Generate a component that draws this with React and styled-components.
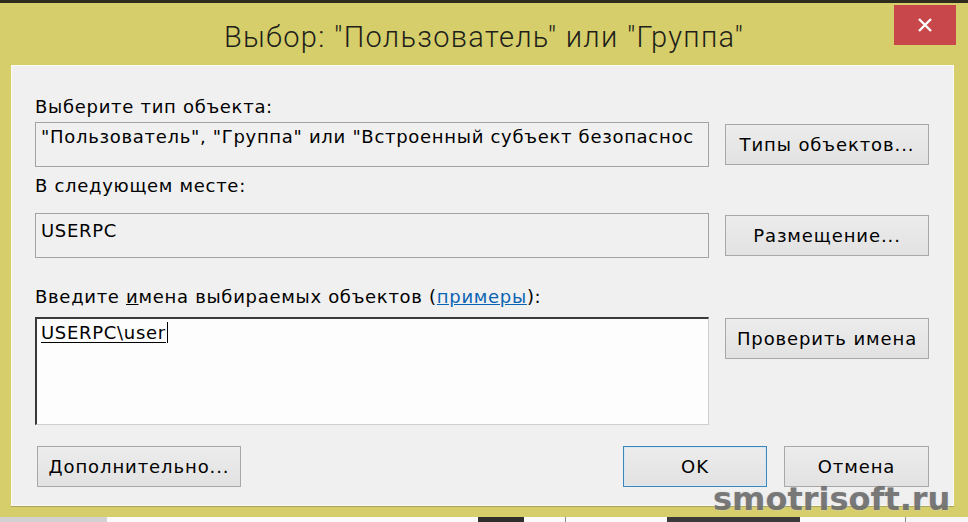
import React from "react";
import styled, { createGlobalStyle } from "styled-components";

const GlobalStyle = createGlobalStyle`
  html, body {
    margin: 0;
    padding: 0;
    width: 968px;
    height: 522px;
    overflow: hidden;
    background: #d6ce6a;
  }
  #root {
    width: 968px;
    height: 522px;
  }
`;

const Window = styled.div`
  position: relative;
  width: 968px;
  height: 522px;
  box-sizing: border-box;
  display: flex;
  flex-direction: column;
  background: #d6ce6a;
  border-top: 3px solid #2e2d1d;
  font-family: "DejaVu Sans", sans-serif;
  color: #000;
  overflow: hidden;
`;

const TitleBar = styled.div`
  display: grid;
  grid-template-columns: 1fr auto 1fr;
  align-items: start;
  height: 62px;
`;

const Title = styled.h1`
  grid-column: 2;
  margin: 17px 0 0;
  font-family: Roboto, "Liberation Sans", sans-serif;
  font-weight: 300;
  font-size: 29px;
  line-height: 34px;
  letter-spacing: 1.3px;
  color: #1e1e1a;
  white-space: nowrap;
`;

const CloseButton = styled.button`
  grid-column: 3;
  justify-self: end;
  margin: 2px 12px 0 0;
  width: 62px;
  height: 40px;
  border: none;
  padding: 0;
  background: #c7474a;
  display: flex;
  align-items: center;
  justify-content: center;
`;

const Panel = styled.div`
  margin: 0 14px 0 11px;
  padding: 30px 24px 18px 23px;
  background: #f0f0f0;
  border: 1px solid #fbfbf2;
  box-shadow: 0 1px 0 #aaa25a;
  display: flex;
  flex-direction: column;
  letter-spacing: 0.7px;
`;

const Label = styled.div`
  font-size: 18px;
  line-height: 22px;
  margin-top: ${(p) => p.$top || 0}px;
  margin-bottom: ${(p) => p.$bottom || 0}px;
  white-space: nowrap;
`;

const AccessKey = styled.span`
  text-decoration: underline;
`;

const Link = styled.span`
  color: #0a64b4;
  text-decoration: underline;
`;

const Row = styled.div`
  display: grid;
  grid-template-columns: 1fr 204px;
  column-gap: 16px;
  align-items: ${(p) => p.$align || "center"};
`;

const Field = styled.div`
  height: 45px;
  box-sizing: border-box;
  border: 1px solid #a3a3a3;
  background: #f0f0f0;
  padding: ${(p) => p.$padTop || 4}px 5px 0;
  font-size: 18px;
  line-height: 22px;
  white-space: nowrap;
  overflow: hidden;
`;

const NamesBox = styled.div`
  height: 108px;
  box-sizing: border-box;
  background: #fdfdfd;
  border-top: 2px solid #3a3a3a;
  border-left: 2px solid #3a3a3a;
  border-right: 1px solid #cfcfcf;
  border-bottom: 1px solid #cfcfcf;
  padding: 3px 4px 0;
  font-size: 18px;
  line-height: 22px;
`;

const Resolved = styled.span`
  text-decoration: underline;
  text-underline-offset: 3px;
  border-right: 1px solid #000;
  padding-right: 1px;
`;

const Button = styled.button`
  height: 41px;
  width: ${(p) => p.$width || 204}px;
  box-sizing: border-box;
  margin: 0;
  padding: 0;
  font-family: "DejaVu Sans", sans-serif;
  font-size: 18px;
  letter-spacing: 0.9px;
  color: #000;
  background: linear-gradient(#ececec, #e2e2e2);
  border: 1px solid ${(p) => (p.$primary ? "#3f86b8" : "#a8a8a8")};
  box-shadow: ${(p) => (p.$primary ? "inset 0 0 0 1px #d6e8f4" : "none")};
  white-space: nowrap;
`;

const FooterRow = styled.div`
  display: flex;
  align-items: center;
  margin-top: 21px;
  padding-left: 2px;
  gap: 17px;
`;

const Spacer = styled.div`
  flex: 1;
`;

const BottomStrip = styled.div`
  display: flex;
  height: 5px;
  background: #f6f6f6;
`;

const StripPart = styled.div`
  width: ${(p) => p.$width}px;
  background: ${(p) => p.$color};
`;

const Watermark = styled.div`
  position: absolute;
  left: 713px;
  top: 480px;
  font-family: "DejaVu Sans", sans-serif;
  font-weight: bold;
  font-size: 32px;
  line-height: 32px;
  color: #6e6e6e;
  text-shadow: 0 0 2px #d8d8d8;
  opacity: 0.92;
  pointer-events: none;
`;

const CloseIcon = () => (
    <svg width="16" height="14" viewBox="0 0 16 14">
        <path d="M2 1 L14 13 M14 1 L2 13" stroke="#fff" strokeWidth="2.4" />
    </svg>
);

export default function App() {
    return (
        <>
            <GlobalStyle />
            <Window>
                <TitleBar>
                    <Title>Выбор: "Пользователь" или "Группа"</Title>
                    <CloseButton aria-label="Закрыть">
                        <CloseIcon />
                    </CloseButton>
                </TitleBar>
                <Panel>
                    <Label $bottom={4}>Выберите тип объекта:</Label>
                    <Row>
                        <Field $padTop={3}>
                            "Пользователь", "Группа" или "Встроенный субъект безопаснос
                        </Field>
                        <Button>Типы объектов...</Button>
                    </Row>
                    <Label $top={8} $bottom={16}>В следующем месте:</Label>
                    <Row>
                        <Field $padTop={6}>USERPC</Field>
                        <Button>Размещение...</Button>
                    </Row>
                    <Label $top={28} $bottom={9}>
                        Введите <AccessKey>и</AccessKey>мена выбираемых объектов (<Link>примеры</Link>):
                    </Label>
                    <Row $align="start">
                        <NamesBox>
                            <Resolved>USERPC\user</Resolved>
                        </NamesBox>
                        <Button style={{ marginTop: 1 }}>Проверить имена</Button>
                    </Row>
                    <FooterRow>
                        <Button>Дополнительно...</Button>
                        <Spacer />
                        <Button $width={144} $primary>OK</Button>
                        <Button $width={145}>Отмена</Button>
                    </FooterRow>
                </Panel>
                <Spacer />
                <BottomStrip>
                    <StripPart $width={107} $color="#d2d2d2" />
                    <StripPart $width={371} $color="#fafafa" />
                    <StripPart $width={46} $color="#2e2e2a" />
                    <StripPart $width={41} $color="#fafafa" />
                    <StripPart $width={1} $color="#8a8a8a" />
                    <StripPart $width={101} $color="#fafafa" />
                    <StripPart $width={133} $color="#3a3a3a" />
                    <StripPart $width={105} $color="#fafafa" />
                    <StripPart $width={1} $color="#8a8a8a" />
                </BottomStrip>
                <Watermark>smotrisoft.ru</Watermark>
            </Window>
        </>
    );
}
